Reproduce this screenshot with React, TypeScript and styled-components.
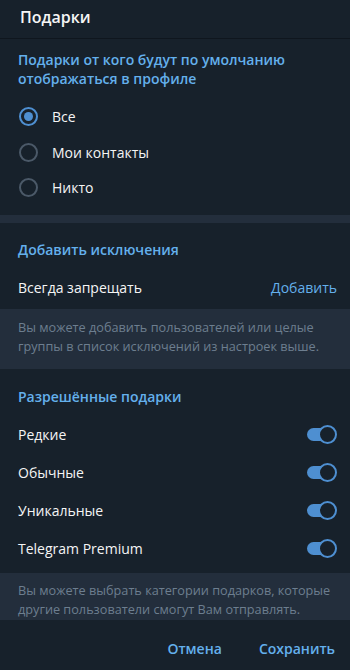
import styled, { createGlobalStyle } from "styled-components";

const GlobalStyle = createGlobalStyle`
  html, body {
    margin: 0;
    padding: 0;
    background: #17212b;
  }
  body {
    font-family: "Open Sans", "Noto Sans", sans-serif;
    -webkit-font-smoothing: antialiased;
  }
`;

const Panel = styled.div`
  width: 350px;
  height: 670px;
  background: #17212b;
  color: #f5f5f5;
  display: flex;
  flex-direction: column;
  overflow: hidden;
`;

const Header = styled.div`
  height: 39px;
  display: flex;
  align-items: center;
  padding: 0 20px 4px;
  box-sizing: border-box;
  border-bottom: 1px solid #0f161e;
  font-size: 16px;
  font-weight: 600;
  color: #f5f5f5;
`;

const Section = styled.div<{ $top?: number; $bottom?: number }>`
  padding: ${(p) => p.$top ?? 14}px 0 ${(p) => p.$bottom ?? 0}px;
`;

const SectionTitle = styled.div`
  padding: 0 18px;
  font-size: 14px;
  font-weight: 600;
  line-height: 19px;
  color: #64b0ec;
`;

const RadioList = styled.div`
  display: flex;
  flex-direction: column;
  padding: 11px 0 9px;
`;

const RadioRow = styled.label`
  height: 35.5px;
  display: flex;
  align-items: center;
  gap: 14px;
  padding: 0 19px;
  font-size: 14px;
  color: #f5f5f5;
`;

const RadioCircle = styled.span<{ $checked?: boolean }>`
  width: 19px;
  height: 19px;
  box-sizing: border-box;
  border-radius: 50%;
  border: 2px solid ${(p) => (p.$checked ? "#4e8fd1" : "#4b5968")};
  display: flex;
  align-items: center;
  justify-content: center;
  &::after {
    content: "";
    width: 9px;
    height: 9px;
    border-radius: 50%;
    background: ${(p) => (p.$checked ? "#4e8fd1" : "transparent")};
  }
`;

const Band = styled.div`
  height: 8px;
  background: #232e3c;
`;

const Row = styled.div`
  height: 38px;
  display: flex;
  align-items: center;
  justify-content: space-between;
  padding: 0 13px 0 18px;
  font-size: 14px;
  color: #f5f5f5;
`;

const RowGroup = styled.div<{ $gap: number }>`
  margin-top: ${(p) => p.$gap}px;
`;

const LinkText = styled.span`
  color: #64b0ec;
  font-size: 14px;
`;

const Info = styled.div<{ $top: number; $bottom: number }>`
  background: #232e3c;
  padding: ${(p) => p.$top}px 18px ${(p) => p.$bottom}px;
  font-size: 12.7px;
  line-height: 19px;
  white-space: nowrap;
  color: #6d7e8f;
`;

const Toggle = styled.span`
  position: relative;
  width: 30px;
  height: 19px;
  display: inline-block;
  &::before {
    content: "";
    position: absolute;
    left: 0;
    top: 3px;
    width: 26px;
    height: 13px;
    border-radius: 7px;
    background: #4e8fd1;
  }
  &::after {
    content: "";
    position: absolute;
    right: 0;
    top: 0;
    width: 19px;
    height: 19px;
    box-sizing: border-box;
    border-radius: 50%;
    border: 2px solid #4e8fd1;
    background: #17212b;
  }
`;

const Footer = styled.div`
  flex: 1;
  display: flex;
  align-items: center;
  justify-content: flex-end;
  gap: 37px;
  padding: 7px 15px 0;
`;

const FooterButton = styled.span`
  font-size: 14px;
  font-weight: 600;
  color: #64b0ec;
`;

const radios = [
  { label: "Все", checked: true },
  { label: "Мои контакты", checked: false },
  { label: "Никто", checked: false },
];

const gifts = ["Редкие", "Обычные", "Уникальные", "Telegram Premium"];

export default function App() {
  return (
    <Panel>
      <GlobalStyle />
      <Header>Подарки</Header>
      <Section $top={11}>
        <SectionTitle>
          Подарки от кого будут по умолчанию
          <br />
          отображаться в профиле
        </SectionTitle>
        <RadioList>
          {radios.map((r) => (
            <RadioRow key={r.label}>
              <RadioCircle $checked={r.checked} />
              {r.label}
            </RadioRow>
          ))}
        </RadioList>
      </Section>
      <Band />
      <Section $top={17} $bottom={2}>
        <SectionTitle>Добавить исключения</SectionTitle>
        <RowGroup $gap={10}>
          <Row>
            <span>Всегда запрещать</span>
            <LinkText>Добавить</LinkText>
          </Row>
        </RowGroup>
      </Section>
      <Info $top={9} $bottom={13}>
        Вы можете добавить пользователей или целые
        <br />
        группы в список исключений из настроек выше.
      </Info>
      <Section $top={18} $bottom={5}>
        <SectionTitle>Разрешённые подарки</SectionTitle>
        <RowGroup $gap={10}>
          {gifts.map((g) => (
            <Row key={g}>
              <span>{g}</span>
              <Toggle />
            </Row>
          ))}
        </RowGroup>
      </Section>
      <Info $top={8} $bottom={1}>
        Вы можете выбрать категории подарков, которые
        <br />
        другие пользователи смогут Вам отправлять.
      </Info>
      <Footer>
        <FooterButton>Отмена</FooterButton>
        <FooterButton>Сохранить</FooterButton>
      </Footer>
    </Panel>
  );
}
